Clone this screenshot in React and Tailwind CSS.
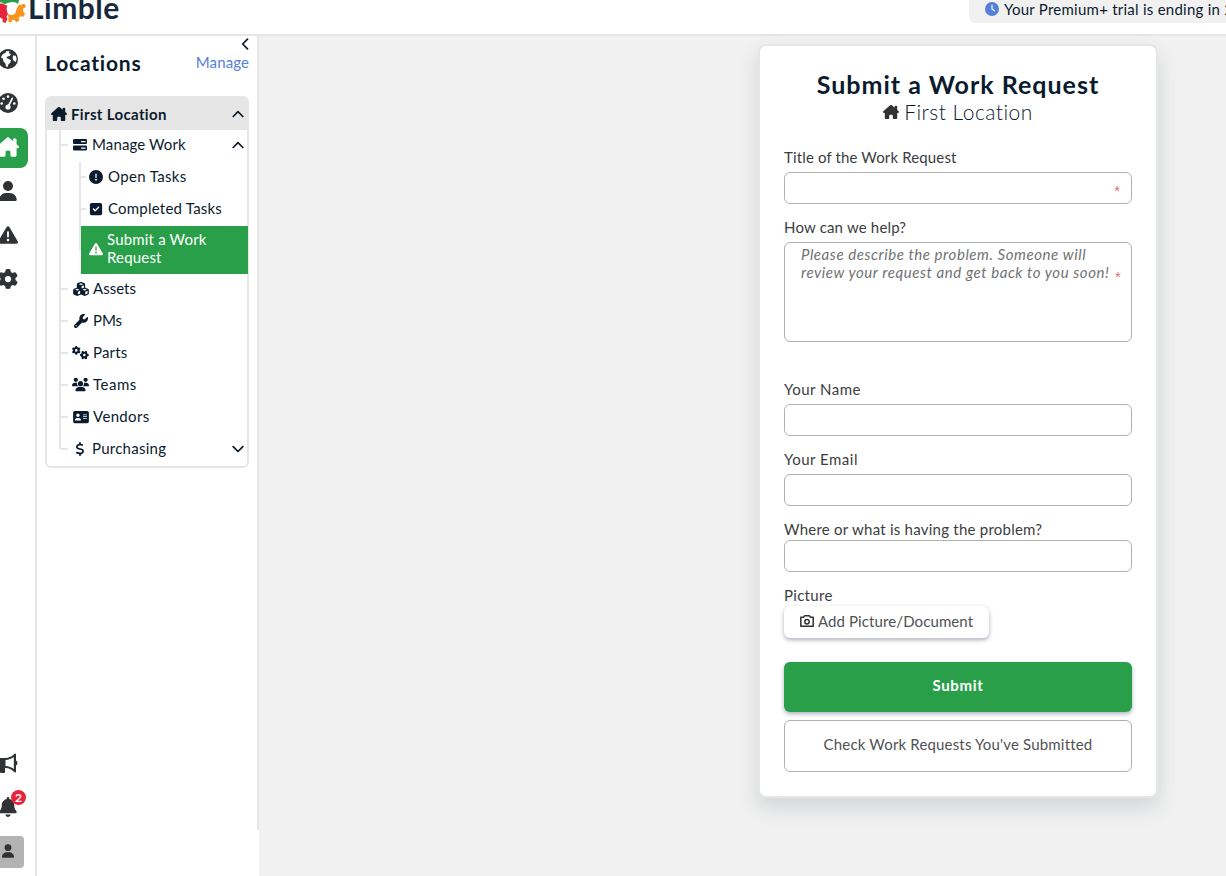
import { FaHouseChimney, FaUser, FaTriangleExclamation, FaGear, FaBell, FaCircleExclamation, FaSquareCheck, FaCubes, FaWrench, FaGears, FaUsers, FaAddressCard, FaDollarSign, FaClock } from "react-icons/fa6";

const Chevron = ({ d, className }) => (
  <svg viewBox="0 0 12 12" className={className} fill="none" stroke="currentColor" strokeWidth="1.7" strokeLinecap="round" strokeLinejoin="round">
    <path d={d} />
  </svg>
);
const UP = "M1.2 8.5 6 3.7 10.8 8.5";
const DOWN = "M1.2 3.7 6 8.5 10.8 3.7";

const Bars = ({ className }) => (
  <svg viewBox="0 0 14 12" className={className} fill="currentColor">
    <path fillRule="evenodd" d="M1.3 0h11.4Q14 0 14 1.3v2.4Q14 5 12.7 5H1.3Q0 5 0 3.7V1.3Q0 0 1.3 0ZM8 2v1.2h4.5V2Z" />
    <path fillRule="evenodd" d="M1.3 6.5h11.4q1.3 0 1.3 1.3v2.4q0 1.3-1.3 1.3H1.3Q0 11.500 0 10.200V7.800q0-1.300 1.300-1.300ZM8 8.500v1.200h4.500V8.500Z" />
  </svg>
);

const Globe = ({ className }) => (
  <svg viewBox="0 0 20 20" className={className}>
    <circle cx="10" cy="10" r="10" fill="currentColor" />
    <path d="M3.500 7 5 5l2.500-1.200L8.500 2l3 .2-.7 1.800L13 5.500 11.500 7 9.500 7.500 8.300 9l2 .8 2.700 1.500-.8 2.500-1.900 1.600L9.500 18l-1.500-.5-.6-3L5.500 12.500l-.6-2.700L3 8.500Z" fill="#fff" />
    <path d="m15 6.500 2.800.3.900 3.200-.8 2.800-1.900-.6-1.300-2.400Z" fill="#fff" />
  </svg>
);

const Dial = ({ className }) => (
  <svg viewBox="0 0 20 20" className={className}>
    <circle cx="10" cy="10" r="10" fill="currentColor" />
    <g fill="#fff">
      <circle cx="3.700" cy="10.500" r="1.300" /><circle cx="5.500" cy="5.800" r="1.300" /><circle cx="10" cy="3.600" r="1.300" /><circle cx="16.300" cy="10.500" r="1.300" />
      <circle cx="10" cy="14" r="2.600" />
    </g>
    <path d="M10 14 14.300 5.300" stroke="#fff" strokeWidth="1.700" strokeLinecap="round" />
  </svg>
);

const Megaphone = ({ className }) => (
  <svg viewBox="0 0 20 20" className={className} fill="currentColor">
    <path fillRule="evenodd" d="M0 5h7c4 0 7.500-2 9.500-4.300Q18 0 18 1.500v6q1.500.8 1.500 2.500T18 12.500v6q0 1.500-1.500.8C14.500 17 11 15 7.500 15H7v4q0 1-1 1H3q-1 0-1-1v-4H0ZM7.500 7v6c3.300.2 6 1.300 8.300 3V4C13.500 5.700 10.800 6.800 7.500 7Z" />
  </svg>
);

const Camera = ({ className }) => (
  <svg viewBox="0 0 14 12" className={className} fill="none" stroke="currentColor" strokeWidth="1.500" strokeLinejoin="round">
    <path d="M.8 2.300h2.700L4.500.8h5l1 1.500h2.700v8.900H.8Z" />
    <circle cx="7" cy="6.700" r="2.200" />
  </svg>
);

const Logo = () => (
  <svg viewBox="0 0 26 24" className="h-6 w-[26px] shrink-0">
    <path d="M0 0h19l-.8 4Q15 1.500 11 2.200 7 2.500 4.500 4.500 3 2 0 2.200Z" fill="#2a9f4a" />
    <path d="M0 3.500h2.500Q5 5.500 7.300 5.500 5.800 9.500 8 14l-1.500 2.500 1 2.500-2 4-3-1 .3-3L0 17.500Z" fill="#e8243a" />
    <path d="M19.500 4.500 21.500 5.300 22.300 4h2.900l.3 3.300-2.300 1.500v2.700l1.800 2.200-1.500 3.100-3-.6-2 1.800.9 2.500-3.200 1.700-2-2.400-2 .3-1 2.700-2.900-1 .3-4.300q-.5-1.500-.6-3.500 5 2.500 7.500-1 1.200-6.300 4-8.500Z" fill="#f7941d" />
  </svg>
);

const Rail = () => (
  <nav className="flex w-[37px] shrink-0 flex-col border-r-2 border-[#e6e6e6] text-[#303234]">
    <div className="flex h-[46px] items-center"><Globe className="-ml-[2px] size-5" /></div>
    <div className="flex h-[42px] items-center"><Dial className="-ml-[2px] size-5" /></div>
    <div className="mt-1 flex h-10 w-7 items-center rounded-r-lg bg-[#299f4a] pb-[2px] text-white"><FaHouseChimney className="-ml-[3px] size-[22px]" /></div>
    <div className="flex h-[46px] items-center"><FaUser className="-ml-[1px] h-5 w-[18px]" /></div>
    <div className="flex h-[42px] items-center"><FaTriangleExclamation className="-ml-[2px] size-5" /></div>
    <div className="flex h-[46px] items-center"><FaGear className="-ml-[2px] size-5" /></div>
    <div className="mt-auto flex h-[42px] items-center"><Megaphone className="-ml-[2px] size-5" /></div>
    <div className="relative flex h-[46px] items-center">
      <FaBell className="-ml-[1px] h-5 w-[18px]" />
      <span className="absolute top-[6px] left-[11px] flex size-[15px] items-center justify-center rounded-full bg-[#e8243a] text-[12px] leading-none font-bold text-white">2</span>
    </div>
    <div className="mt-[6px] mb-2 flex h-8 w-6 items-center rounded-r-[4px] bg-[#b3b3b3] pb-[2px]"><FaUser className="ml-[2px] h-[14px] w-3" /></div>
  </nav>
);

const Item = ({ icon: Icon, label, open, tracking, iconClass = "h-[14px] w-4" }) => (
  <div className="flex h-8 items-center pb-[3px]">
    <span className="h-[2px] w-[7px] shrink-0 bg-[#e6e6e6]" />
    <span className={(open ? "ml-[2px]" : "ml-[3px]") + " flex w-[19px] justify-center"}><Icon className={iconClass} /></span>
    <span className={"ml-[3px] " + tracking}>{label}</span>
    {open && <Chevron d={open} className="mr-[3px] ml-auto size-3" />}
  </div>
);

const SubItem = ({ icon: Icon, label, tracking }) => (
  <div className="flex h-8 items-center pb-[3px]">
    <span className="h-[2px] w-[5px] bg-[#e6e6e6]" />
    <Icon className="ml-[3px] size-[14px]" />
    <span className={"ml-[5px] " + tracking}>{label}</span>
  </div>
);

const Sidebar = () => (
  <aside className="w-[222px] shrink-0 bg-white text-[#0b1b2e]">
    <div className="flex h-[794px] flex-col border-r-2 border-[#e6e6e6] pl-2">
      <div className="flex h-4 justify-end pt-[2px] pr-[6px]"><Chevron d="M8.500 1.200 3.700 6 8.500 10.800" className="size-3" /></div>
      <div className="flex h-[22px] items-center justify-between pr-2 pb-px">
        <h2 className="text-[21px] font-bold tracking-[0.800px]">Locations</h2>
        <a className="text-[15px] tracking-[0.100px] text-[#5580d8]">Manage</a>
      </div>
      <div className="mt-[22px] w-[204px] rounded-md border-2 border-[#e6e6e6] text-[15px]">
        <div className="flex h-8 items-center bg-[#e6e6e6] pl-1 font-bold">
          <FaHouseChimney className="size-4" />
          <span className="ml-1 tracking-[0.350px]">First Location</span>
          <Chevron d={UP} className="mr-[3px] ml-auto size-3" />
        </div>
        <div className="relative pl-[14px]">
          <span className="absolute top-0 left-[12px] h-[319px] w-[2px] bg-[#e6e6e6]" />
          <Item icon={Bars} label="Manage Work" open={UP} tracking="tracking-[0.120px]" iconClass="h-3 w-[14px]" />
          <div className="relative pl-[20px]">
            <span className="absolute top-0 left-[18px] h-[88px] w-[2px] bg-[#e6e6e6]" />
            <SubItem icon={FaCircleExclamation} label="Open Tasks" tracking="tracking-[0.350px]" />
            <SubItem icon={FaSquareCheck} label="Completed Tasks" tracking="tracking-[0.220px]" />
            <div className="relative -mr-px flex h-12 items-center bg-[#299f4a] pb-[4px] pl-2 leading-[18px] text-white">
              <FaTriangleExclamation className="mt-[2px] size-[14px]" />
              <span className="ml-1 w-[120px] tracking-[0.180px]">Submit a Work Request</span>
            </div>
          </div>
          <Item icon={FaCubes} label="Assets" tracking="tracking-[0.000px]" />
          <Item icon={FaWrench} label="PMs" tracking="tracking-[-0.100px]" />
          <Item icon={FaGears} label="Parts" tracking="tracking-[0.150px]" iconClass="h-[15px] w-[17px]" />
          <Item icon={FaUsers} label="Teams" tracking="tracking-[0.500px]" iconClass="h-[15px] w-[17px]" />
          <Item icon={FaAddressCard} label="Vendors" tracking="tracking-[0.350px]" />
          <Item icon={FaDollarSign} label="Purchasing" open={DOWN} tracking="tracking-[0.250px]" />
        </div>
      </div>
    </div>
  </aside>
);

const Label = ({ children, className }) => <div className={"flex h-5 items-center pb-[2px] text-[15px] text-[#3b3d3f] " + className}>{children}</div>;
const Star = ({ className }) => <span className={"font-['Liberation_Sans',sans-serif] text-[15px] leading-4 text-[#ee6b78] not-italic " + className}>*</span>;
const Field = ({ required }) => (
  <div className="flex h-8 items-center justify-end rounded-md border border-[#b0b0b0] pr-[11px]">
    {required && <Star className="pt-[5px]" />}
  </div>
);

const RequestCard = () => (
  <section className="mt-2 ml-[499px] h-[754px] w-[400px] rounded-lg border-2 border-[#e6e6e6] bg-white px-6 pt-[23px] shadow-[0_10px_20px_rgba(60,75,90,0.170)]">
    <h1 className="text-center text-[25px] leading-[30px] font-bold tracking-[1px] whitespace-nowrap text-[#0b1b2e]">Submit a Work Request</h1>
    <div className="flex h-[26px] items-center justify-center text-[21px] font-light tracking-[0.480px] text-[#0b1b2e]">
      <FaHouseChimney className="mr-[5px] size-4 text-[#303234]" />First Location
    </div>
    <Label className="mt-[23px] tracking-[0.140px]">Title of the Work Request</Label>
    <div className="mt-1"><Field required /></div>
    <Label className="mt-[14px] tracking-[0.180px]">How can we help?</Label>
    <div className="mt-1 flex h-[100px] rounded-md border border-[#b0b0b0] pt-[2px] pl-4 text-[15px] leading-[18px] text-[#707274] italic">
      <p className="w-[314px] tracking-[0.570px] whitespace-nowrap">Please describe the problem. Someone will<br />review your request and get back to you soon!</p>
      <Star className="pt-[24px]" />
    </div>
    <Label className="mt-[38px] tracking-[0.500px]">Your Name</Label>
    <div className="mt-1"><Field /></div>
    <Label className="mt-[14px] tracking-[0.500px]">Your Email</Label>
    <div className="mt-1"><Field /></div>
    <Label className="mt-[14px] tracking-[0.240px]">Where or what is having the problem?</Label>
    <Field />
    <Label className="mt-[14px] tracking-[0.300px]">Picture</Label>
    <button className="flex h-8 w-[205px] items-center rounded-md pb-[2px] pl-4 text-[15px] text-[#505254] shadow-[0_2px_4px_rgba(40,50,80,0.380)]">
      <Camera className="mr-1 h-3 w-[14px] text-[#303234]" /><span className="tracking-[0.100px]">Add Picture/Document</span>
    </button>
    <button className="mt-6 h-[50px] w-full rounded-md bg-[#299f4a] pb-[3px] text-[15px] font-bold tracking-[0.700px] text-white shadow-[0_2px_4px_rgba(40,50,80,0.380)]">Submit</button>
    <button className="mt-2 h-[52px] w-full rounded-md border border-[#b0b0b0] pb-[3px] text-[15px] tracking-[0.170px] text-[#505254]">Check Work Requests You've Submitted</button>
  </section>
);

export default function App() {
  return (
    <div className="flex h-[876px] w-[1226px] flex-col overflow-hidden bg-white font-['Lato',sans-serif]">
      <header className="flex h-9 shrink-0 items-start justify-between border-b-2 border-[#e6e6e6]">
        <div className="flex items-start">
          <Logo />
          <span className="-mt-[9px] ml-[2px] text-[30px] leading-8 font-bold tracking-[0.500px] text-[#17293c]">Limble</span>
        </div>
        <div className="flex h-[23px] w-[257px] items-center overflow-hidden rounded-bl-md bg-[#f1f1f1] pb-[5px] pl-4 text-[15px] whitespace-nowrap text-[#0b1b2e]">
          <FaClock className="mr-[5px] size-[14px] shrink-0 text-[#5580d8]" />
          <span className="tracking-[0.250px]">Your Premium+ trial is ending in 23 days</span>
        </div>
      </header>
      <div className="flex min-h-0 flex-1">
        <Rail />
        <Sidebar />
        <main className="flex-1 bg-[#f1f1f1]"><RequestCard /></main>
      </div>
    </div>
  );
}
